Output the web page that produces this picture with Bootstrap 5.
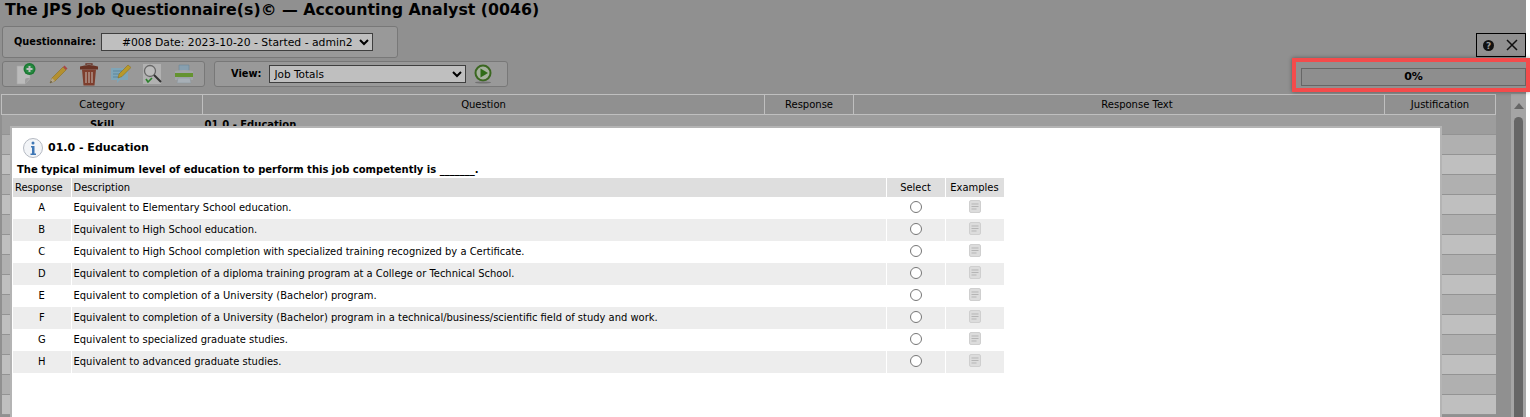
<!DOCTYPE html>
<html lang="en">
<head>
<meta charset="UTF-8">
<title>The JPS Job Questionnaire(s)</title>
<link rel="stylesheet" href="https://cdn.jsdelivr.net/npm/bootstrap@5.3.0/dist/css/bootstrap.min.css">
<style>
html, body { height: 417px; overflow: hidden; background: #fff; }
body { font-family: "DejaVu Sans", Verdana, sans-serif; font-size: 10px; color: #000; }
.jps-page { position: relative; width: 1526px; height: 417px; background: #c1c1c1; }
.jps-title { font-size: 15.8px; font-weight: 700; line-height: 20px; margin: 0; padding-left: 5px; height: 26px; white-space: nowrap; }
.jps-panel { background: #cdcdcd; border: 1px solid #a0a0a0; border-radius: 3px; }
.jps-qpanel { width: 396px; height: 32px; margin-left: 2px; padding-left: 11px; }
.jps-toolrow { margin: 3px 0 0 2px; height: 26px; }
.jps-tools { width: 203px; padding-left: 13px; gap: 11.5px; }
.jps-viewpanel { width: 294px; margin-left: 9px; padding-left: 16px; }
.jps-label { font-weight: 700; font-size: 9.8px; }
.jps-select { appearance: auto; height: 18px; font: 10.5px "DejaVu Sans", sans-serif; background: #fff; color: #000; border: 1px solid #555; padding: 0 2px; border-radius: 0; }
.jps-select-q { width: 272px; margin-left: 5px; padding-left: 16px; font-size: 10.8px; }
.jps-select-v { width: 197px; margin-left: 8px; padding-left: 0; }
.jps-main { margin-top: 7px; height: 323px; overflow: hidden; }
.jps-grid { width: 1494px; margin-left: 1px; table-layout: fixed; border-collapse: collapse; }
.jps-grid th { height: 20px; font-weight: 400; text-align: center; border: 1px solid #fff; font-size: 10px; padding: 0; }
.jps-grid .jps-resp-text { padding-left: 36px; }
.jps-grid td { height: 20px; padding: 0 2px; border-bottom: 1px solid #c4c4c4; background: #fff; }
.jps-grid tr.jps-odd td { background: #ebebeb; }
.jps-grid tr.jps-first td { background: #d2d2d2; font-weight: 700; font-size: 10px; }
.jps-track { width: 17px; margin-left: 15px; height: 100%; background: #dcdcdc; padding-top: 9px; }
.jps-thumb { width: 9px; height: 320px; margin: 8px auto 0; background: #888; border-radius: 5px 5px 0 0; }
.jps-arrow { width: 0; height: 0; margin: 0 auto; border: 5px solid transparent; border-top: 0; border-bottom: 6px solid #888; }
.jps-shade { position: absolute; inset: 0; background: rgba(0,0,0,.25); }
.jps-close { position: absolute; left: 1476px; top: 33px; width: 50px; height: 24px; border: 1px solid #000; }
.jps-help { margin-left: 5px; }
.jps-x { margin-right: 7px; }
.jps-progress-box { position: absolute; left: 1292px; top: 58px; width: 238px; height: 34px; border: 4px solid #f44b4b; box-shadow: 0 0 4px rgba(0,0,0,.4); }
.jps-progress { width: 225px; height: 18px; margin: 6px 0 0 5px; border: 1px solid #666; background: #8e8e8e; text-align: center; font-weight: 700; font-size: 11px; line-height: 16px; }
.jps-dialog { position: absolute; left: 10px; top: 126px; width: 1432px; height: 291px; background: #fff; border: 2px solid #b4b4b4; border-bottom: 0; padding: 9px 1px 0; }
.jps-dialog-title { font-size: 11px; font-weight: 700; padding-left: 10px; height: 22px; gap: 5px; }
.jps-dialog-title span { padding-top: 1px; }
.jps-question { font-size: 10px; font-weight: 700; margin: 4px 0 1px 4px; line-height: 14px; white-space: nowrap; }
.jps-resp { width: 991px; table-layout: fixed; border-collapse: collapse; font-size: 9.95px; }
.jps-resp th { height: 19px; background: #dedede; font-weight: 400; padding: 2px 2px 0; border-right: 1px solid #fff; }
.jps-resp td { height: 22px; padding: 0 2px; border-right: 1px solid #fff; }
.jps-resp tr:nth-child(even) td { background: #ededed; }
.jps-radio { width: 12px; height: 12px; border: 1px solid #767676; border-radius: 50%; background: #fff; display: block; margin: -2px auto 0; }
.jps-doc { margin-top: -3px; }
</style>
</head>
<body>
<div class="jps-page">
  <h1 class="jps-title">The JPS Job Questionnaire(s)© — Accounting Analyst (0046)</h1>

  <div class="jps-panel jps-qpanel d-flex align-items-center">
    <span class="jps-label">Questionnaire:</span>
    <select class="jps-select jps-select-q"><option>#008 Date: 2023-10-20 - Started - admin2</option></select>
  </div>

  <div class="jps-toolrow d-flex">
    <div class="jps-panel jps-tools d-flex align-items-center">
      <svg width="20" height="22" viewBox="0 0 20 22"><path d="M1 3h13v13l-5 5H1z" fill="#fafafa" stroke="#ddd" stroke-width=".6"/><path d="M14 15l-5 6v-4q0-2 2-2z" fill="#d4d4d4"/><circle cx="13.500" cy="6" r="6" fill="#23a143"/><circle cx="13.500" cy="6" r="4.500" fill="#35b858"/><path d="M13.500 3v6M10.500 6h6" stroke="#fff" stroke-width="2"/></svg>
      <svg width="20" height="22" viewBox="0 0 20 22"><path d="M2 20l2-5L15 4l3 3L7 18z" fill="#f0c040" stroke="#b08a20" stroke-width=".5"/><path d="M15 4l1.500-1.500 3 3L18 7z" fill="#e06060"/><path d="M2 20l2-5 3 3z" fill="#efdcb8"/><path d="M2 20l1-2 1 1z" fill="#444"/></svg>
      <svg width="20" height="23" viewBox="0 0 20 23"><path d="M1 3.500q9-3 18 0v3H1z" fill="#8a4330"/><path d="M7 2V.8h6V2" fill="none" stroke="#8a4330" stroke-width="1.300"/><path d="M3 6.500h14l-1.500 16h-11z" fill="#a8533c"/><path d="M7 9v11M10 9v11M13 9v11" stroke="#e6bfb0" stroke-width="1.600"/></svg>
      <svg width="20" height="22" viewBox="0 0 20 22"><path d="M0 5h17v12H9l-3 3v-3H0z" fill="#aadcf4"/><path d="M2 8h9M2 11h7M2 14h6" stroke="#78b4d4"/><path d="M7 15l1-4 9-9 3 2.500-9 9z" fill="#f6cc3a" stroke="#b08a20" stroke-width=".5"/></svg>
      <svg width="20" height="22" viewBox="0 0 20 22"><path d="M1 1h18v20H1z" fill="#ececec"/><circle cx="8" cy="8" r="5.500" fill="#fafafa" stroke="#8a8a8a" stroke-width="1.300"/><path d="M12 12l7 7" stroke="#444" stroke-width="2"/><path d="M4 16l2 3 4-4" fill="none" stroke="#3cae3c" stroke-width="1.700"/></svg>
      <svg width="20" height="22" viewBox="0 0 20 22"><path d="M5 2h10v6H5z" fill="#b4d4ea" stroke="#92b2c8" stroke-width=".6"/><path d="M1 8q9-2 18 0v9H1z" fill="#d8dde0"/><path d="M1 10h18v4H1z" fill="#86c440"/><path d="M4 15h12l1 5H3z" fill="#dfeaf3" stroke="#b6c4ce" stroke-width=".5"/></svg>
    </div>
    <div class="jps-panel jps-viewpanel d-flex align-items-center">
      <span class="jps-label">View:</span>
      <select class="jps-select jps-select-v"><option>Job Totals</option></select>
      <svg class="ms-2" width="18" height="20" viewBox="0 0 18 20"><circle cx="9" cy="9" r="7.500" fill="#dcebd2" stroke="#4f8a2c" stroke-width="2"/><path d="M6.500 4.500l7.500 4.500-7.500 4.500z" fill="#3f8f1f"/><ellipse cx="9" cy="18.500" rx="8" ry="1" fill="#999"/></svg>
    </div>
  </div>

  <div class="jps-main d-flex">
    <table class="jps-grid align-self-start">
      <colgroup><col style="width:201px"><col style="width:562px"><col style="width:89px"><col style="width:531px"><col style="width:111px"></colgroup>
      <thead><tr><th>Category</th><th>Question</th><th>Response</th><th class="jps-resp-text">Response Text</th><th>Justification</th></tr></thead>
      <tbody id="grid-rows"></tbody>
    </table>
    <div class="jps-track"><div class="jps-arrow"></div><div class="jps-thumb"></div></div>
  </div>

  <div class="jps-shade"></div>

  <div class="jps-close d-flex align-items-center">
    <svg class="jps-help" width="13" height="13" viewBox="0 0 13 13"><circle cx="6.500" cy="6.500" r="5.500" fill="#111"/><text x="6.500" y="10" text-anchor="middle" font-size="9" font-weight="700" font-family="DejaVu Sans" fill="#999">?</text></svg>
    <svg class="jps-x ms-auto" width="12" height="12" viewBox="0 0 12 12"><path d="M1 1l10 10M11 1L1 11" stroke="#111" stroke-width="1.500"/></svg>
  </div>

  <div class="jps-progress-box"><div class="jps-progress">0%</div></div>

  <div class="jps-dialog">
    <div class="jps-dialog-title d-flex align-items-center">
      <svg width="20" height="20" viewBox="0 0 20 20"><circle cx="10" cy="10" r="9.500" fill="#f2f4f7" stroke="#b4b9c2"/><circle cx="10" cy="5" r="1.500" fill="#3f77b5"/><path d="M8 8h3.500v7.500H13V17H7.500v-1.500H9V9.500H8z" fill="#3f77b5"/></svg>
      <span>01.0 - Education</span>
    </div>
    <p class="jps-question">The typical minimum level of education to perform this job competently is _______.</p>
    <table class="jps-resp">
      <colgroup><col style="width:58px"><col style="width:815px"><col style="width:59px"><col style="width:59px"></colgroup>
      <thead><tr><th>Response</th><th>Description</th><th class="text-center">Select</th><th class="text-center">Examples</th></tr></thead>
      <tbody id="resp-rows"></tbody>
    </table>
  </div>
</div>

<script src="https://cdn.jsdelivr.net/npm/bootstrap@5.3.0/dist/js/bootstrap.bundle.min.js"></script>
<script>
    const responses = [
        ["A", "Equivalent to Elementary School education."],
        ["B", "Equivalent to High School education."],
        ["C", "Equivalent to High School completion with specialized training recognized by a Certificate."],
        ["D", "Equivalent to completion of a diploma training program at a College or Technical School."],
        ["E", "Equivalent to completion of a University (Bachelor) program."],
        ["F", "Equivalent to completion of a University (Bachelor) program in a technical/business/scientific field of study and work."],
        ["G", "Equivalent to specialized graduate studies."],
        ["H", "Equivalent to advanced graduate studies."]
    ];
    const docIcon = '<svg class="jps-doc d-block mx-auto" width="12" height="13" viewBox="0 0 12 13"><rect x=".5" y=".5" width="11" height="12" rx="1.500" fill="#dcdcdc" stroke="#cfcfcf"/><path d="M2.500 4h7M2.500 6.500h7M2.500 9h5" stroke="#b5b5b5"/></svg>';
    let respHtml = "";
    responses.forEach((r) => {
        respHtml += `<tr><td class="text-center">${r[0]}</td><td>${r[1]}</td><td><span class="jps-radio"></span></td><td>${docIcon}</td></tr>`;
    });
    document.getElementById("resp-rows").innerHTML = respHtml;

    let gridHtml = '<tr class="jps-first"><td class="text-center">Skill</td><td>01.0 - Education</td><td></td><td></td><td></td></tr>';
    for (let i = 0; i < 14; i++) {
        gridHtml += `<tr class="${i % 2 === 0 ? "jps-odd" : ""}"><td></td><td></td><td></td><td></td><td></td></tr>`;
    }
    document.getElementById("grid-rows").innerHTML = gridHtml;
</script>
</body>
</html>
